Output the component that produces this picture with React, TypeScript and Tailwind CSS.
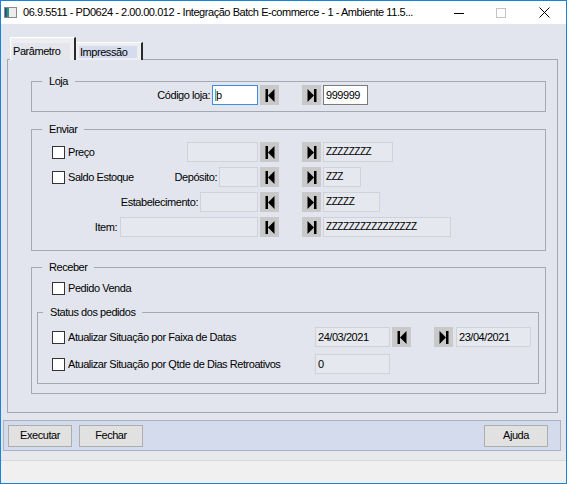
import React from "react";

const BODY = "bg-[#e2e5ee]";

function NavBtn({ dir, className = "" }: { dir: "first" | "last"; className?: string }) {
  return (
    <div className={`flex h-[20px] w-[19px] shrink-0 items-center justify-center bg-[#c9c9c9] ${className}`}>
      <svg width="10" height="13" viewBox="0 0 10 13">
        {dir === "first" ? (
          <>
            <rect x="0.5" y="0" width="2.5" height="13" fill="#000" />
            <polygon points="9.5,0 3,6.5 9.5,13" fill="#000" />
          </>
        ) : (
          <>
            <polygon points="0.5,0 7,6.5 0.5,13" fill="#000" />
            <rect x="7" y="0" width="2.5" height="13" fill="#000" />
          </>
        )}
      </svg>
    </div>
  );
}

function Box({ text = "", className = "" }: { text?: string; className?: string }) {
  return (
    <div className={`flex h-[20px] shrink-0 items-center border pl-[2px] leading-none ${className}`}>
      {text}
    </div>
  );
}

const OFF = "bg-[#e5e8ee] border-[#cfd2d8]";

function Check({ label }: { label: string }) {
  return (
    <div className="flex items-center">
      <span className="h-[13px] w-[13px] shrink-0 border border-[#333] bg-white" />
      <span className="ml-[3px] whitespace-nowrap">{label}</span>
    </div>
  );
}

function Group({
  title,
  className = "",
  legendLeft = "left-[10px]",
  children,
}: {
  title: string;
  className?: string;
  legendLeft?: string;
  children: React.ReactNode;
}) {
  return (
    <div className={`relative flex flex-col border border-[#a5a9b2] ${className}`}>
      <span className={`absolute -top-[7px] ${legendLeft} ${BODY} px-[7px] leading-[13px]`}>{title}</span>
      {children}
    </div>
  );
}

// row with left part ending at the shared column, then |< >| and the upper bound
function RangeRow({
  left,
  rightText,
  rightClass,
  rightTone = OFF,
}: {
  left: React.ReactNode;
  rightText: string;
  rightClass: string;
  rightTone?: string;
}) {
  return (
    <div className="flex h-[20px] items-center">
      <div className="flex w-[226px] shrink-0 items-center">{left}</div>
      <NavBtn dir="first" className="ml-[2px]" />
      <NavBtn dir="last" className="ml-[23px]" />
      <Box text={rightText} className={`ml-[2px] ${rightClass} ${rightTone}`} />
    </div>
  );
}

export default function App() {
  return (
    <div className="flex h-[484px] w-[567px] flex-col border border-[#1883d7] font-['Liberation_Sans',Arial,sans-serif] text-[11px] tracking-[-0.45px] text-black">
      {/* title bar */}
      <div className="flex h-[23px] shrink-0 items-center bg-white">
        <svg className="ml-[3px]" width="13" height="11" viewBox="0 0 13 11">
          <rect x="0.5" y="0.5" width="12" height="10" fill="#ececec" stroke="#8a8a8a" />
          <rect x="1" y="1" width="4" height="9" fill="#2f8f86" />
          <rect x="1" y="1" width="1.5" height="9" fill="#23507a" />
        </svg>
        <span className="ml-[6px] flex-1 whitespace-nowrap">
          06.9.5511 - PD0624 - 2.00.00.012 - Integração Batch E-commerce - 1 - Ambiente 11.5...
        </span>
        <div className="flex h-full w-[42px] items-center justify-center">
          <svg width="10" height="10" viewBox="0 0 10 10">
            <rect x="0" y="5" width="10" height="1" fill="#000" />
          </svg>
        </div>
        <div className="flex h-full w-[42px] items-center justify-center">
          <svg width="10" height="10" viewBox="0 0 10 10">
            <rect x="0.5" y="0.5" width="9" height="9" fill="none" stroke="#c4c4c4" />
          </svg>
        </div>
        <div className="flex h-full w-[44px] items-center justify-center">
          <svg width="11" height="11" viewBox="0 0 11 11">
            <path d="M0.5 0.5 L10.5 10.5 M10.5 0.5 L0.5 10.5" stroke="#000" strokeWidth="1" />
          </svg>
        </div>
      </div>

      {/* client area */}
      <div className={`flex flex-1 flex-col ${BODY}`}>
        {/* tabs */}
        <div className="mt-[13px] flex h-[23px] items-end pl-[9px]">
          <div className="relative z-10 flex h-[23px] w-[66px] items-start border-l border-t border-r-2 border-l-white border-t-white border-r-[#2a2a2a] bg-[#eceef2] pl-[2px] pt-[5px]">
            <span className="bg-[#e4e6eb] pr-[10px]">Parâmetro</span>
          </div>
          <div className="relative z-10 flex h-[18px] w-[67px] items-center border-t border-r-2 border-t-white border-r-[#2a2a2a] bg-[#eceef2] pl-[3px] pr-[4px]">
            <span className="flex-1 bg-[#d5dcef] pl-[1px] leading-[12px]">Impressão</span>
          </div>
        </div>

        {/* tab page */}
        <div className="relative -mt-[1px] ml-[6px] flex h-[354px] w-[551px] flex-col border border-[#a2a6ae] pl-[23px] pr-[11px] pt-[21px]">
          <Group title="Loja" className="pb-[6px] pt-[3px]">
            <RangeRow
              left={
                <div className="flex w-full items-center justify-end">
                  <span className="mr-[2px]">Código loja:</span>
                  <div className="flex h-[20px] w-[46px] items-center border border-[#3d8ee0] bg-white pl-[2px]">
                    <span className="border-l border-l-[#38b0b8] leading-[12px]">þ</span>
                  </div>
                </div>
              }
              rightText="999999"
              rightClass="w-[45px]"
              rightTone="bg-white border-[#7a7a7a]"
            />
          </Group>

          <Group title="Enviar" className="mt-[17px] gap-[5px] pb-[13px] pt-[12px]">
            <RangeRow
              left={
                <>
                  <div className="flex-1 pl-[20px]">
                    <Check label="Preço" />
                  </div>
                  <Box className={`w-[71px] ${OFF}`} />
                </>
              }
              rightText="ZZZZZZZZ"
              rightClass="w-[70px] text-[10px]"
            />
            <RangeRow
              left={
                <>
                  <div className="flex-1 pl-[20px]">
                    <Check label="Saldo Estoque" />
                  </div>
                  <span className="mr-[2px]">Depósito:</span>
                  <Box className={`w-[39px] ${OFF}`} />
                </>
              }
              rightText="ZZZ"
              rightClass="w-[38px] text-[10px]"
            />
            <RangeRow
              left={
                <div className="flex w-full items-center justify-end">
                  <span className="mr-[2px]">Estabelecimento:</span>
                  <Box className={`w-[58px] ${OFF}`} />
                </div>
              }
              rightText="ZZZZZ"
              rightClass="w-[57px] text-[10px]"
            />
            <RangeRow
              left={
                <div className="flex w-full items-center justify-end">
                  <span className="mr-[3px]">Item:</span>
                  <Box className={`w-[138px] ${OFF}`} />
                </div>
              }
              rightText="ZZZZZZZZZZZZZZZZ"
              rightClass="w-[128px] text-[10px]"
            />
          </Group>

          <Group title="Receber" className="mt-[16px] pb-[9px] pt-[10px]">
            <div className="flex h-[20px] items-center pl-[20px]">
              <Check label="Pedido Venda" />
            </div>
            <Group
              title="Status dos pedidos"
              legendLeft="left-[5px]"
              className="ml-[5px] mr-[6px] mt-[14px] gap-[7px] pb-[9px] pt-[14px]"
            >
              <div className="flex h-[20px] items-center">
                <div className="w-[277px] shrink-0 pl-[14px]">
                  <Check label="Atualizar Situação por Faixa de Datas" />
                </div>
                <Box text="24/03/2021" className={`w-[75px] ${OFF}`} />
                <NavBtn dir="first" className="ml-[2px]" />
                <NavBtn dir="last" className="ml-[23px]" />
                <Box text="23/04/2021" className={`ml-[3px] w-[75px] ${OFF}`} />
              </div>
              <div className="flex h-[20px] items-center">
                <div className="w-[277px] shrink-0 pl-[14px]">
                  <Check label="Atualizar Situação por Qtde de Dias Retroativos" />
                </div>
                <Box text="0" className={`w-[75px] ${OFF}`} />
              </div>
            </Group>
          </Group>
        </div>

        {/* button bar */}
        <div className="ml-[2px] mt-[7px] flex h-[31px] w-[558px] items-center border border-[#a9b1c1] bg-[#d3dbed] pl-[4px] pr-[12px]">
          <button className="h-[22px] w-[64px] border border-[#adadad] bg-[#e1e1e1]">Executar</button>
          <button className="ml-[7px] h-[22px] w-[64px] border border-[#adadad] bg-[#e1e1e1]">Fechar</button>
          <div className="flex-1" />
          <button className="h-[22px] w-[64px] border border-[#adadad] bg-[#e1e1e1]">Ajuda</button>
        </div>

        <div className="h-[9px] shrink-0 bg-[#e8e9ed]" />
        <div className="flex-1 border-t border-t-[#d9d9d9] bg-[#f0f0f0]" />
      </div>
    </div>
  );
}
